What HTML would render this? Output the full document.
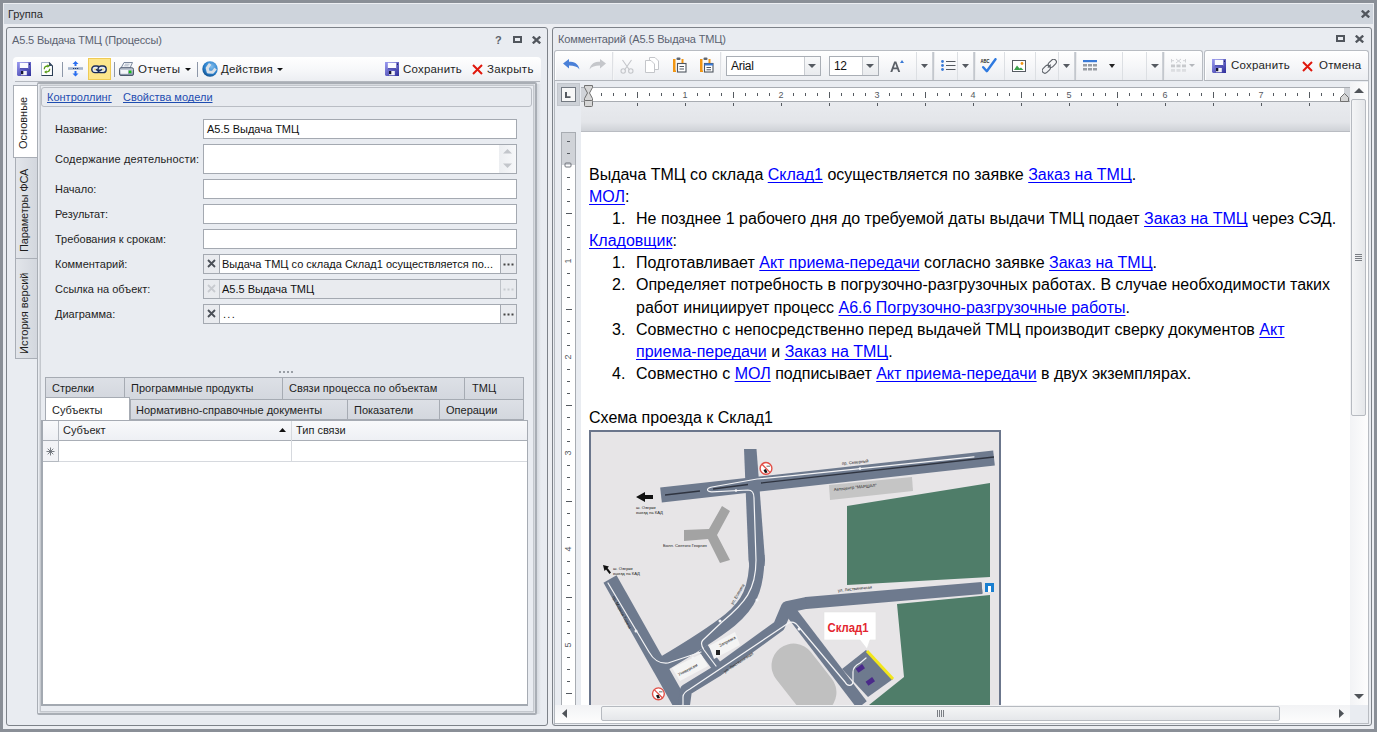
<!DOCTYPE html>
<html><head><meta charset="utf-8">
<style>
*{box-sizing:border-box}
html,body{margin:0;padding:0}
body{width:1377px;height:732px;overflow:hidden;position:relative;background:#8a8f97;font-family:"Liberation Sans",sans-serif;font-size:11px;color:#1e1e1e}
.a{position:absolute}
.t{position:absolute;white-space:nowrap;line-height:13px}
#frame{left:3px;top:3px;width:1371px;height:726px;background:#eceef2}
#gtitle{left:4px;top:4px;width:1369px;height:20px;background:#ced4dc}
.panel{border:1px solid #7d8289;border-radius:3px;background:#e9ecf1}
.lnk{color:#1f4db0;text-decoration:underline;text-decoration-skip-ink:none}
.inp{background:#fff;border:1px solid #a4a9b1}
.tb{background:linear-gradient(#ffffff,#eef0f3);border-radius:3px}
</style></head><body>
<div id="frame" class="a"></div>
<div id="gtitle" class="a"></div>
<div class="t" style="left:8px;top:8px;color:#2b2b2b">Группа</div>

<!-- LEFT PANEL -->
<div class="a panel" style="left:6px;top:27px;width:542px;height:699px"></div>
<div class="t" style="left:12px;top:34px;color:#5b6270;letter-spacing:-0.16px">А5.5 Выдача ТМЦ (Процессы)</div>


<!-- left title icons -->
<div class="t" style="left:495px;top:34px;font-weight:bold;color:#5d636b;font-size:11px">?</div>
<div class="a" style="left:513px;top:36px;width:9px;height:7px;border:2px solid #51565d"></div>
<svg class="a" style="left:532px;top:36px" width="9" height="8" viewBox="0 0 9 8"><path d="M0.8 0.6L8.2 7.4M8.2 0.6L0.8 7.4" stroke="#51565d" stroke-width="2.3"/></svg>

<!-- left toolbar -->
<div class="a" style="left:13px;top:57px;width:528px;height:24px;background:linear-gradient(#ffffff 0%,#f7f8fa 50%,#eceef2 100%);border-radius:4px 4px 0 0"></div>
<div class="a" style="left:15px;top:81px;width:525px;height:1px;background:#b3b7be"></div>


<!-- toolbar icons -->
<svg class="a" style="left:17px;top:62px" width="14" height="14" viewBox="0 0 14 14">
 <defs><linearGradient id="fl" x1="0" y1="0" x2="1" y2="1"><stop offset="0" stop-color="#9c9cf2"/><stop offset="1" stop-color="#2e2e9a"/></linearGradient></defs>
 <path d="M0 0H14V14H1L0 13Z" fill="url(#fl)"/>
 <rect x="2.8" y="0.8" width="8.4" height="6.2" fill="#fbfbff"/><rect x="2.8" y="6.2" width="8.4" height="1" fill="#2a2aa0"/><rect x="12" y="1.5" width="1" height="1.5" fill="#222266"/>
 <rect x="4" y="9" width="5.8" height="4.2" fill="#f2f2f8"/><rect x="4" y="9" width="2.3" height="3.2" fill="#151530"/>
</svg>
<svg class="a" style="left:41px;top:62px" width="12" height="14" viewBox="0 0 12 14">
 <path d="M0.5 0.5H8L11.5 4V13.5H0.5Z" fill="#fff"/>
 <path d="M0.5 13.5V0.5H8" fill="none" stroke="#a3b3ca" stroke-width="1"/>
 <path d="M8 0.5L11.5 4V13.5H0.5" fill="none" stroke="#2c3e55" stroke-width="1.1"/>
 <path d="M8 0.5V4H11.5Z" fill="#3a4d66"/>
 <path d="M3.3 7.2C3.3 5 4.6 4 7 4" fill="none" stroke="#5a9e1a" stroke-width="1.3"/>
 <path d="M6.5 2.3L8.9 4L6.5 5.7Z" fill="#5a9e1a"/>
 <path d="M8.7 6.8C8.7 9 7.4 10 5 10" fill="none" stroke="#5a9e1a" stroke-width="1.3"/>
 <path d="M5.5 8.3L3.1 10L5.5 11.7Z" fill="#5a9e1a"/>
</svg>
<div class="a" style="left:62px;top:62px;width:1px;height:15px;background:#8d97a8"></div>
<svg class="a" style="left:68px;top:61px" width="15" height="16" viewBox="0 0 15 16">
 <rect x="0" y="6.2" width="15" height="2.6" fill="#a5b5cc"/>
 <rect x="5" y="7" width="1.2" height="1" fill="#1d3570"/><rect x="7" y="7" width="1.2" height="1" fill="#1d3570"/><rect x="9" y="7" width="1.2" height="1" fill="#1d3570"/>
 <path d="M7.5 0L10.5 3H8.5V5H6.5V3H4.5Z" fill="#2a6ef0"/>
 <path d="M7.5 15.5L10.5 12.5H8.5V10H6.5V12.5H4.5Z" fill="#2a6ef0"/>
</svg>
<div class="a" style="left:88px;top:58px;width:23px;height:22px;background:#fde68c;border:1px solid #efcb55"></div>
<svg class="a" style="left:91px;top:65px" width="16" height="9" viewBox="0 0 16 9">
 <rect x="0.8" y="1" width="8.2" height="6.6" rx="3.2" fill="#e4ebf5" stroke="#1b2c58" stroke-width="1.4"/>
 <rect x="7" y="1" width="8.2" height="6.6" rx="3.2" fill="#e4ebf5" stroke="#1b2c58" stroke-width="1.4"/>
 <rect x="3" y="3.6" width="2" height="1.6" fill="#f3dc70"/><rect x="11" y="3.6" width="2" height="1.6" fill="#f3dc70"/>
 <path d="M5 4.3C7 5.8 9 5.8 11 4.3" fill="none" stroke="#1b2c58" stroke-width="1.6"/>
</svg>
<div class="a" style="left:114px;top:62px;width:1px;height:15px;background:#8d97a8"></div>
<svg class="a" style="left:119px;top:62px" width="15" height="14" viewBox="0 0 15 14">
 <defs><linearGradient id="pb" x1="0" y1="0" x2="0" y2="1"><stop offset="0" stop-color="#cfd6e0"/><stop offset="1" stop-color="#7f8ca0"/></linearGradient></defs>
 <path d="M5 0.5H13.5L11 6H2Z" fill="#f1f3f7" stroke="#6d7b92" stroke-width="0.9"/>
 <path d="M6 2.2H10.5M5.2 3.8H9.5" stroke="#9aa6b8" stroke-width="0.7"/>
 <path d="M0.5 7.5Q0.5 5.8 2 5.8H13Q14.5 5.8 14.5 7.5V12Q14.5 13.5 13 13.5H2Q0.5 13.5 0.5 12Z" fill="url(#pb)" stroke="#3f4c62" stroke-width="0.9"/>
 <rect x="1.5" y="8" width="7.5" height="3.8" fill="#f4f6fa"/>
 <rect x="9.8" y="8.6" width="2.6" height="2.6" fill="#12c012"/>
</svg>
<div class="t" style="left:138px;top:63px;font-size:11.5px;color:#1e1e1e;letter-spacing:0.45px">Отчеты</div>
<svg class="a" style="left:185px;top:68px" width="6" height="3" viewBox="0 0 6 3"><path d="M0 0H6L3 3Z" fill="#111"/></svg>
<div class="a" style="left:197px;top:62px;width:1px;height:15px;background:#8d97a8"></div>
<svg class="a" style="left:202px;top:61px" width="16" height="16" viewBox="0 0 16 16">
 <defs><radialGradient id="gl" cx="0.6" cy="0.35" r="0.7"><stop offset="0" stop-color="#7fbcec"/><stop offset="0.65" stop-color="#2a80cc"/><stop offset="1" stop-color="#0f4c88"/></radialGradient></defs>
 <circle cx="8" cy="8" r="7.7" fill="url(#gl)"/>
 <path d="M8.2 2.8L5.2 7.2L6.2 11L10.8 11.2L13.6 7.6" fill="none" stroke="#d9e0e8" stroke-width="3" stroke-linejoin="round"/>
</svg>
<div class="t" style="left:221px;top:63px;font-size:11.5px;color:#1e1e1e;letter-spacing:0.2px">Действия</div>
<svg class="a" style="left:277px;top:68px" width="6" height="3" viewBox="0 0 6 3"><path d="M0 0H6L3 3Z" fill="#111"/></svg>
<svg class="a" style="left:385px;top:62px" width="14" height="14" viewBox="0 0 14 14">
 <path d="M0 0H14V14H1L0 13Z" fill="url(#fl)"/>
 <rect x="2.8" y="0.8" width="8.4" height="6.2" fill="#fbfbff"/><rect x="2.8" y="6.2" width="8.4" height="1" fill="#2a2aa0"/><rect x="12" y="1.5" width="1" height="1.5" fill="#222266"/>
 <rect x="4" y="9" width="5.8" height="4.2" fill="#f2f2f8"/><rect x="4" y="9" width="2.3" height="3.2" fill="#151530"/>
</svg>
<div class="t" style="left:403px;top:63px;font-size:11.5px;color:#1e1e1e;letter-spacing:0.2px">Сохранить</div>
<svg class="a" style="left:472px;top:64px" width="11" height="11" viewBox="0 0 11 11"><path d="M1 1L10 10M10 1L1 10" stroke="#e0180c" stroke-width="2"/></svg>
<div class="t" style="left:487px;top:63px;font-size:11.5px;color:#1e1e1e;letter-spacing:0.35px">Закрыть</div>

<!-- vertical tabs -->
<div class="a" style="left:15px;top:157px;width:22px;height:102px;background:linear-gradient(90deg,#e2e5ea,#d3d7de);border:1px solid #a9aeb6;border-right:none"></div>
<div class="a" style="left:15px;top:258px;width:22px;height:101px;background:linear-gradient(90deg,#e2e5ea,#d3d7de);border:1px solid #a9aeb6;border-right:none"></div>
<div class="a" style="left:13px;top:85px;width:25px;height:73px;background:#fff;border:1px solid #a9aeb6;border-right:none"></div>
<div class="t" style="left:17px;top:149px;transform-origin:0 0;transform:rotate(-90deg);color:#1e1e1e">Основные</div>
<div class="t" style="left:18px;top:252px;transform-origin:0 0;transform:rotate(-90deg);color:#1e1e1e;letter-spacing:-0.15px">Параметры ФСА</div>
<div class="t" style="left:18px;top:354px;transform-origin:0 0;transform:rotate(-90deg);color:#1e1e1e">История версий</div>

<!-- content area -->
<div class="a" style="left:37px;top:82px;width:500px;height:633px;border:1px solid #a9aeb5;border-width:2px 2px 2px 1px;border-radius:2px"></div>
<div class="a" style="left:39px;top:84px;width:496px;height:629px;border:1px solid #d7dadf;border-radius:2px"></div>
<div class="a" style="left:40px;top:85px;width:494px;height:627px;border:1px solid #c4c8ce;"></div>

<div class="a" style="left:537px;top:84px;width:4px;height:630px;background:linear-gradient(90deg,#d5d9df,#e9ecf1)"></div>
<div class="a" style="left:41px;top:87px;width:491px;height:20px;border:1px solid #b9bdc4;border-radius:3px;background:#e8ebf0"></div>
<div class="t lnk" style="left:47px;top:91px">Контроллинг</div>
<div class="t lnk" style="left:123px;top:91px">Свойства модели</div>

<div class="t" style="left:55px;top:123px">Название:</div>
<div class="t" style="left:55px;top:153px;letter-spacing:0.15px">Содержание деятельности:</div>
<div class="t" style="left:55px;top:183px">Начало:</div>
<div class="t" style="left:55px;top:208px">Результат:</div>
<div class="t" style="left:55px;top:233px">Требования к срокам:</div>
<div class="t" style="left:55px;top:258px">Комментарий:</div>
<div class="t" style="left:55px;top:283px">Ссылка на объект:</div>
<div class="t" style="left:55px;top:308px">Диаграмма:</div>

<div class="a inp" style="left:203px;top:119px;width:314px;height:20px"></div>
<div class="t" style="left:207px;top:123px;color:#111">А5.5 Выдача ТМЦ</div>
<div class="a inp" style="left:203px;top:144px;width:314px;height:30px"></div>
<div class="a" style="left:499px;top:145px;width:17px;height:28px;background:linear-gradient(90deg,#eceef1,#f7f8fa)"></div>
<svg class="a" style="left:502px;top:148px" width="11" height="22" viewBox="0 0 11 22"><path d="M1 5.5L5.5 1L10 5.5Z" fill="#c3c6cb"/><path d="M1 15.5L5.5 20L10 15.5Z" fill="#c3c6cb"/></svg>
<div class="a inp" style="left:203px;top:179px;width:314px;height:20px"></div>
<div class="a inp" style="left:203px;top:204px;width:314px;height:20px"></div>
<div class="a inp" style="left:203px;top:229px;width:314px;height:20px"></div>

<div class="a inp" style="left:203px;top:254px;width:314px;height:20px"></div>
<div class="a" style="left:204px;top:255px;width:16px;height:18px;background:#e9ebef;border-right:1px solid #a4a9b1"></div>
<svg class="a" style="left:207px;top:259px" width="9" height="9" viewBox="0 0 9 9"><path d="M1 1L8 8M8 1L1 8" stroke="#4a4f57" stroke-width="1.8"/></svg>
<div class="t" style="left:222px;top:258px;color:#111">Выдача ТМЦ со склада Склад1 осуществляется по...</div>
<div class="a" style="left:500px;top:255px;width:16px;height:18px;background:#e9ebef;border-left:1px solid #a4a9b1"></div>
<svg class="a" style="left:503px;top:263px" width="11" height="3" viewBox="0 0 11 3"><rect x="0.5" y="0.5" width="2" height="2" fill="#444"/><rect x="4.5" y="0.5" width="2" height="2" fill="#444"/><rect x="8.5" y="0.5" width="2" height="2" fill="#444"/></svg>

<div class="a inp" style="left:203px;top:279px;width:314px;height:20px;background:#e9ebef"></div>
<div class="a" style="left:204px;top:280px;width:16px;height:18px;background:#e9ebef;border-right:1px solid #bfc3c9"></div>
<svg class="a" style="left:207px;top:284px" width="9" height="9" viewBox="0 0 9 9"><path d="M1 1L8 8M8 1L1 8" stroke="#c8cbd0" stroke-width="1.8"/></svg>
<div class="t" style="left:222px;top:283px;color:#111">А5.5 Выдача ТМЦ</div>
<div class="a" style="left:500px;top:280px;width:16px;height:18px;background:#e9ebef;border-left:1px solid #bfc3c9"></div>
<svg class="a" style="left:503px;top:288px" width="11" height="3" viewBox="0 0 11 3"><rect x="0.5" y="0.5" width="2" height="2" fill="#c8cbd0"/><rect x="4.5" y="0.5" width="2" height="2" fill="#c8cbd0"/><rect x="8.5" y="0.5" width="2" height="2" fill="#c8cbd0"/></svg>

<div class="a inp" style="left:203px;top:304px;width:314px;height:20px"></div>
<div class="a" style="left:204px;top:305px;width:16px;height:18px;background:#e9ebef;border-right:1px solid #a4a9b1"></div>
<svg class="a" style="left:207px;top:309px" width="9" height="9" viewBox="0 0 9 9"><path d="M1 1L8 8M8 1L1 8" stroke="#4a4f57" stroke-width="1.8"/></svg>
<div class="t" style="left:223px;top:308px;color:#111;letter-spacing:1.3px">...</div>
<div class="a" style="left:500px;top:305px;width:16px;height:18px;background:#e9ebef;border-left:1px solid #a4a9b1"></div>
<svg class="a" style="left:503px;top:313px" width="11" height="3" viewBox="0 0 11 3"><rect x="0.5" y="0.5" width="2" height="2" fill="#444"/><rect x="4.5" y="0.5" width="2" height="2" fill="#444"/><rect x="8.5" y="0.5" width="2" height="2" fill="#444"/></svg>

<!-- splitter dots -->
<svg class="a" style="left:279px;top:371px" width="14" height="2" viewBox="0 0 14 2"><rect x="0" y="0" width="2" height="2" fill="#9a9fa6"/><rect x="4" y="0" width="2" height="2" fill="#9a9fa6"/><rect x="8" y="0" width="2" height="2" fill="#9a9fa6"/><rect x="12" y="0" width="2" height="2" fill="#9a9fa6"/></svg>

<!-- bottom tabs -->
<div class="a" style="left:45px;top:377px;width:80px;height:23px;background:linear-gradient(#dde0e6,#d3d7de);border:1px solid #a6abb3"></div>
<div class="a" style="left:124px;top:377px;width:159px;height:23px;background:linear-gradient(#dde0e6,#d3d7de);border:1px solid #a6abb3"></div>
<div class="a" style="left:282px;top:377px;width:183px;height:23px;background:linear-gradient(#dde0e6,#d3d7de);border:1px solid #a6abb3"></div>
<div class="a" style="left:464px;top:377px;width:60px;height:23px;background:linear-gradient(#dde0e6,#d3d7de);border:1px solid #a6abb3"></div>
<div class="t" style="left:52px;top:382px">Стрелки</div>
<div class="t" style="left:131px;top:382px">Программные продукты</div>
<div class="t" style="left:289px;top:382px">Связи процесса по объектам</div>
<div class="t" style="left:472px;top:382px">ТМЦ</div>

<div class="a" style="left:130px;top:399px;width:218px;height:21px;background:linear-gradient(#dde0e6,#d3d7de);border:1px solid #a6abb3"></div>
<div class="a" style="left:347px;top:399px;width:93px;height:21px;background:linear-gradient(#dde0e6,#d3d7de);border:1px solid #a6abb3"></div>
<div class="a" style="left:439px;top:399px;width:85px;height:21px;background:linear-gradient(#dde0e6,#d3d7de);border:1px solid #a6abb3"></div>
<div class="t" style="left:136px;top:404px">Нормативно-справочные документы</div>
<div class="t" style="left:354px;top:404px">Показатели</div>
<div class="t" style="left:446px;top:404px">Операции</div>

<!-- grid -->
<div class="a" style="left:41px;top:420px;width:487px;height:286px;background:#fff;border:2px solid #a3a9b1;border-top:1px solid #a6abb3;border-right:1px solid #a6abb3"></div>
<div class="a" style="left:43px;top:421px;width:484px;height:20px;background:linear-gradient(#f8f9fb,#eef0f4);border-bottom:1px solid #a9aeb6"></div>
<div class="a" style="left:58px;top:421px;width:1px;height:41px;background:#b4b9c0"></div>
<div class="a" style="left:291px;top:421px;width:1px;height:41px;background:#d6d9de"></div>
<div class="a" style="left:43px;top:441px;width:15px;height:21px;background:#f2f3f6;border-bottom:1px solid #b4b9c0"></div>
<div class="a" style="left:59px;top:461px;width:468px;height:1px;background:#d6d9de"></div>
<div class="t" style="left:63px;top:424px">Субъект</div>
<svg class="a" style="left:279px;top:428px" width="7" height="4" viewBox="0 0 7 4"><path d="M0 4L3.5 0L7 4Z" fill="#111"/></svg>
<div class="t" style="left:296px;top:424px">Тип связи</div>
<svg class="a" style="left:46px;top:447px" width="9" height="9" viewBox="0 0 9 9"><path d="M4.5 0.5V8.5M0.5 4.5H8.5M1.7 1.7L7.3 7.3M7.3 1.7L1.7 7.3" stroke="#6a6f76" stroke-width="0.9"/></svg>

<!-- selected tab on top -->
<div class="a" style="left:45px;top:397px;width:85px;height:23px;background:#fff;border:1px solid #a6abb3;border-bottom:none"></div>
<div class="t" style="left:52px;top:404px">Субъекты</div>

<!-- RIGHT PANEL -->
<div class="a panel" style="left:552px;top:27px;width:820px;height:699px"></div>
<div class="t" style="left:558px;top:33px;color:#5b6270;letter-spacing:-0.14px">Комментарий (А5.5 Выдача ТМЦ)</div>
<!-- editor area -->
<div class="a" style="left:554px;top:60px;width:814px;height:665px;background:#e9ecf1;border-left:1px solid #b3b8be"></div>
<div class="a" style="left:557px;top:83px;width:23px;height:23px;background:#cdd1d7;border:1px solid #c2c6cc"></div>
<div class="a" style="left:561px;top:87px;width:15px;height:15px;background:#f7f7f7;border:1px solid #737981"></div>
<svg class="a" style="left:565px;top:92px" width="6" height="6" viewBox="0 0 6 6"><path d="M0 0H2V4.2H5.5V6H0Z" fill="#555a60"/></svg>
<div class="a" style="left:581px;top:101px;width:769px;height:30px;background:linear-gradient(#e9ebef 0%,#e3e5e9 70%,#cfd2d7 100%)"></div>
<div class="a" style="left:581px;top:87px;width:769px;height:15px;background:#fff;border-top:1px solid #a8acb2;border-bottom:1px solid #a8acb2"></div>
<div class="a" style="left:581px;top:88px;width:8px;height:13px;background:#d0d3d8"></div>
<div class="a" style="left:1344px;top:88px;width:6px;height:13px;background:#d0d3d8"></div>
<svg class="a" style="left:0;top:0" width="1377" height="732" viewBox="0 0 1377 732">
<rect x="601" y="93" width="1" height="3" fill="#555a60"/>
<rect x="613" y="93" width="1" height="3" fill="#555a60"/>
<rect x="625" y="93" width="1" height="3" fill="#555a60"/>
<rect x="637" y="92" width="1" height="6" fill="#555a60"/>
<rect x="649" y="93" width="1" height="3" fill="#555a60"/>
<rect x="661" y="93" width="1" height="3" fill="#555a60"/>
<rect x="673" y="93" width="1" height="3" fill="#555a60"/>
<text x="685" y="98" font-family="Liberation Sans" font-size="9" fill="#55595f" text-anchor="middle">1</text>
<rect x="697" y="93" width="1" height="3" fill="#555a60"/>
<rect x="709" y="93" width="1" height="3" fill="#555a60"/>
<rect x="721" y="93" width="1" height="3" fill="#555a60"/>
<rect x="733" y="92" width="1" height="6" fill="#555a60"/>
<rect x="745" y="93" width="1" height="3" fill="#555a60"/>
<rect x="757" y="93" width="1" height="3" fill="#555a60"/>
<rect x="769" y="93" width="1" height="3" fill="#555a60"/>
<text x="781" y="98" font-family="Liberation Sans" font-size="9" fill="#55595f" text-anchor="middle">2</text>
<rect x="793" y="93" width="1" height="3" fill="#555a60"/>
<rect x="805" y="93" width="1" height="3" fill="#555a60"/>
<rect x="817" y="93" width="1" height="3" fill="#555a60"/>
<rect x="829" y="92" width="1" height="6" fill="#555a60"/>
<rect x="841" y="93" width="1" height="3" fill="#555a60"/>
<rect x="853" y="93" width="1" height="3" fill="#555a60"/>
<rect x="865" y="93" width="1" height="3" fill="#555a60"/>
<text x="877" y="98" font-family="Liberation Sans" font-size="9" fill="#55595f" text-anchor="middle">3</text>
<rect x="889" y="93" width="1" height="3" fill="#555a60"/>
<rect x="901" y="93" width="1" height="3" fill="#555a60"/>
<rect x="913" y="93" width="1" height="3" fill="#555a60"/>
<rect x="925" y="92" width="1" height="6" fill="#555a60"/>
<rect x="937" y="93" width="1" height="3" fill="#555a60"/>
<rect x="949" y="93" width="1" height="3" fill="#555a60"/>
<rect x="961" y="93" width="1" height="3" fill="#555a60"/>
<text x="973" y="98" font-family="Liberation Sans" font-size="9" fill="#55595f" text-anchor="middle">4</text>
<rect x="985" y="93" width="1" height="3" fill="#555a60"/>
<rect x="997" y="93" width="1" height="3" fill="#555a60"/>
<rect x="1009" y="93" width="1" height="3" fill="#555a60"/>
<rect x="1021" y="92" width="1" height="6" fill="#555a60"/>
<rect x="1033" y="93" width="1" height="3" fill="#555a60"/>
<rect x="1045" y="93" width="1" height="3" fill="#555a60"/>
<rect x="1057" y="93" width="1" height="3" fill="#555a60"/>
<text x="1069" y="98" font-family="Liberation Sans" font-size="9" fill="#55595f" text-anchor="middle">5</text>
<rect x="1081" y="93" width="1" height="3" fill="#555a60"/>
<rect x="1093" y="93" width="1" height="3" fill="#555a60"/>
<rect x="1105" y="93" width="1" height="3" fill="#555a60"/>
<rect x="1117" y="92" width="1" height="6" fill="#555a60"/>
<rect x="1129" y="93" width="1" height="3" fill="#555a60"/>
<rect x="1141" y="93" width="1" height="3" fill="#555a60"/>
<rect x="1153" y="93" width="1" height="3" fill="#555a60"/>
<text x="1165" y="98" font-family="Liberation Sans" font-size="9" fill="#55595f" text-anchor="middle">6</text>
<rect x="1177" y="93" width="1" height="3" fill="#555a60"/>
<rect x="1189" y="93" width="1" height="3" fill="#555a60"/>
<rect x="1201" y="93" width="1" height="3" fill="#555a60"/>
<rect x="1213" y="92" width="1" height="6" fill="#555a60"/>
<rect x="1225" y="93" width="1" height="3" fill="#555a60"/>
<rect x="1237" y="93" width="1" height="3" fill="#555a60"/>
<rect x="1249" y="93" width="1" height="3" fill="#555a60"/>
<text x="1261" y="98" font-family="Liberation Sans" font-size="9" fill="#55595f" text-anchor="middle">7</text>
<rect x="1273" y="93" width="1" height="3" fill="#555a60"/>
<rect x="1285" y="93" width="1" height="3" fill="#555a60"/>
<rect x="1297" y="93" width="1" height="3" fill="#555a60"/>
<rect x="1309" y="92" width="1" height="6" fill="#555a60"/>
<rect x="1321" y="93" width="1" height="3" fill="#555a60"/>
<rect x="1333" y="93" width="1" height="3" fill="#555a60"/>
<rect x="637" y="103" width="1" height="3" fill="#555a60"/>
<rect x="685" y="103" width="1" height="3" fill="#555a60"/>
<rect x="733" y="103" width="1" height="3" fill="#555a60"/>
<rect x="781" y="103" width="1" height="3" fill="#555a60"/>
<rect x="829" y="103" width="1" height="3" fill="#555a60"/>
<rect x="877" y="103" width="1" height="3" fill="#555a60"/>
<rect x="925" y="103" width="1" height="3" fill="#555a60"/>
<rect x="973" y="103" width="1" height="3" fill="#555a60"/>
<rect x="1021" y="103" width="1" height="3" fill="#555a60"/>
<rect x="1069" y="103" width="1" height="3" fill="#555a60"/>
<rect x="1117" y="103" width="1" height="3" fill="#555a60"/>
<rect x="1165" y="103" width="1" height="3" fill="#555a60"/>
<rect x="1213" y="103" width="1" height="3" fill="#555a60"/>
<rect x="1261" y="103" width="1" height="3" fill="#555a60"/>
<rect x="1309" y="103" width="1" height="3" fill="#555a60"/>
 <path d="M584.5 85.5H592.5V87.5L589.5 93L592.5 98.5V100.5H584.5V98.5L587.5 93L584.5 87.5Z" fill="#d6d6d6" stroke="#707070" stroke-width="1"/>
 <rect x="584.5" y="100.5" width="8" height="6" rx="1" fill="#d6d6d6" stroke="#707070" stroke-width="1"/>
 <path d="M1340.5 101.5V97.5L1344.5 93.5L1348.5 97.5V101.5Z" fill="#d6d6d6" stroke="#707070" stroke-width="1"/>
</svg>

<!-- page -->
<div class="a" style="left:581px;top:131px;width:769px;height:574px;background:#fff;border-top:1px solid #b9bcc2"></div>
<!-- vertical ruler -->
<div class="a" style="left:561px;top:132px;width:15px;height:573px;background:#fff;border:1px solid #a8acb2;border-bottom:none"></div>
<div class="a" style="left:562px;top:133px;width:13px;height:32px;background:#d0d3d8"></div>
<svg class="a" style="left:0;top:0" width="1377" height="732" viewBox="0 0 1377 732">
<rect x="567" y="141" width="3" height="1" fill="#555a60"/>
<rect x="567" y="153" width="3" height="1" fill="#555a60"/>
<rect x="565" y="163" width="6" height="4" rx="1" fill="none" stroke="#70757c" stroke-width="1"/>
<rect x="567" y="177" width="3" height="1" fill="#555a60"/>
<rect x="567" y="189" width="3" height="1" fill="#555a60"/>
<rect x="567" y="201" width="3" height="1" fill="#555a60"/>
<rect x="566" y="213" width="6" height="1" fill="#555a60"/>
<rect x="567" y="225" width="3" height="1" fill="#555a60"/>
<rect x="567" y="237" width="3" height="1" fill="#555a60"/>
<rect x="567" y="249" width="3" height="1" fill="#555a60"/>
<text x="0" y="0" transform="translate(571 261) rotate(-90)" font-family="Liberation Sans" font-size="9" fill="#55595f" text-anchor="middle">1</text>
<rect x="567" y="273" width="3" height="1" fill="#555a60"/>
<rect x="567" y="285" width="3" height="1" fill="#555a60"/>
<rect x="567" y="297" width="3" height="1" fill="#555a60"/>
<rect x="566" y="309" width="6" height="1" fill="#555a60"/>
<rect x="567" y="321" width="3" height="1" fill="#555a60"/>
<rect x="567" y="333" width="3" height="1" fill="#555a60"/>
<rect x="567" y="345" width="3" height="1" fill="#555a60"/>
<text x="0" y="0" transform="translate(571 357) rotate(-90)" font-family="Liberation Sans" font-size="9" fill="#55595f" text-anchor="middle">2</text>
<rect x="567" y="369" width="3" height="1" fill="#555a60"/>
<rect x="567" y="381" width="3" height="1" fill="#555a60"/>
<rect x="567" y="393" width="3" height="1" fill="#555a60"/>
<rect x="566" y="405" width="6" height="1" fill="#555a60"/>
<rect x="567" y="417" width="3" height="1" fill="#555a60"/>
<rect x="567" y="429" width="3" height="1" fill="#555a60"/>
<rect x="567" y="441" width="3" height="1" fill="#555a60"/>
<text x="0" y="0" transform="translate(571 453) rotate(-90)" font-family="Liberation Sans" font-size="9" fill="#55595f" text-anchor="middle">3</text>
<rect x="567" y="465" width="3" height="1" fill="#555a60"/>
<rect x="567" y="477" width="3" height="1" fill="#555a60"/>
<rect x="567" y="489" width="3" height="1" fill="#555a60"/>
<rect x="566" y="501" width="6" height="1" fill="#555a60"/>
<rect x="567" y="513" width="3" height="1" fill="#555a60"/>
<rect x="567" y="525" width="3" height="1" fill="#555a60"/>
<rect x="567" y="537" width="3" height="1" fill="#555a60"/>
<text x="0" y="0" transform="translate(571 549) rotate(-90)" font-family="Liberation Sans" font-size="9" fill="#55595f" text-anchor="middle">4</text>
<rect x="567" y="561" width="3" height="1" fill="#555a60"/>
<rect x="567" y="573" width="3" height="1" fill="#555a60"/>
<rect x="567" y="585" width="3" height="1" fill="#555a60"/>
<rect x="566" y="597" width="6" height="1" fill="#555a60"/>
<rect x="567" y="609" width="3" height="1" fill="#555a60"/>
<rect x="567" y="621" width="3" height="1" fill="#555a60"/>
<rect x="567" y="633" width="3" height="1" fill="#555a60"/>
<text x="0" y="0" transform="translate(571 645) rotate(-90)" font-family="Liberation Sans" font-size="9" fill="#55595f" text-anchor="middle">5</text>
<rect x="567" y="657" width="3" height="1" fill="#555a60"/>
<rect x="567" y="669" width="3" height="1" fill="#555a60"/>
<rect x="567" y="681" width="3" height="1" fill="#555a60"/>
<rect x="566" y="693" width="6" height="1" fill="#555a60"/>
</svg>


<!-- document text -->
<style>
.doc{position:absolute;left:589px;top:164px;font-family:"Liberation Sans",sans-serif;font-size:16px;line-height:22.1px;color:#000;white-space:nowrap}
.doc a{color:#0000ff;text-decoration:underline;text-decoration-skip-ink:none;text-underline-offset:2.2px}
.doc .li{padding-left:47px;position:relative}
.doc .li .n{position:absolute;left:23px}
</style>
<div class="doc">
<div>Выдача ТМЦ со склада <a>Склад1</a> осуществляется по заявке <a>Заказ на ТМЦ</a>.</div>
<div><a>МОЛ</a>:</div>
<div class="li"><span class="n">1.</span>Не позднее 1 рабочего дня до требуемой даты выдачи ТМЦ подает <a>Заказ на ТМЦ</a> через СЭД.</div>
<div><a>Кладовщик</a>:</div>
<div class="li"><span class="n">1.</span>Подготавливает <a>Акт приема-передачи</a> согласно заявке <a>Заказ на ТМЦ</a>.</div>
<div class="li"><span class="n">2.</span>Определяет потребность в погрузочно-разгрузочных работах. В случае необходимости таких<br>работ инициирует процесс <a>А6.6 Погрузочно-разгрузочные работы</a>.</div>
<div class="li"><span class="n">3.</span>Совместно с непосредственно перед выдачей ТМЦ производит сверку документов <a>Акт<br>приема-передачи</a> и <a>Заказ на ТМЦ</a>.</div>
<div class="li"><span class="n">4.</span>Совместно с <a>МОЛ</a> подписывает <a>Акт приема-передачи</a> в двух экземплярах.</div>
<div>&nbsp;</div>
<div>Схема проезда к Склад1</div>
</div>

<!-- map -->
<svg class="a" style="left:589px;top:430px" width="412" height="275" viewBox="589 430 412 275">
 <rect x="589" y="430" width="412" height="300" fill="#e7e5e7"/>
 <!-- green blocks -->
 <path d="M847 506L990 483V577L847 585Z" fill="#4f7d69"/>
 <path d="M897 604L990 595V705H869L904 677Z" fill="#4f7d69"/>
 <!-- gray building shapes -->
 <path d="M829 485L912 477L913 491L830 500Z" fill="#c5c5c5"/>
 <path d="M722 506L730 511L717 535L730 560L720 563L708 539L684 541L684 530L709 529Z" fill="#a3a3a3"/>
 <rect x="765" y="657" width="78" height="44" rx="22" transform="rotate(52 804 679)" fill="#c0c0c0"/>
 <path d="M744 449H756.5L765 560L764.5 566H749.5L748.5 560Z" fill="#6e7a8e"/>
 <g fill="none" stroke="#6e7a8e" stroke-linejoin="round">
  <path d="M661 495L994 458" stroke-width="15"/>
  <path d="M757 555C757 590 748 605 730 620C715 632 695 645 663 664" stroke-width="15"/>
  <path d="M610 579L681 705" stroke-width="15"/>
  <path d="M703 648L718 668" stroke-width="11"/>
  <path d="M684 705L686 690L717 671L779 626L787 607L806 603L982 588" stroke-width="12"/>
  <path d="M806 603L982 588" stroke-width="10"/>
  <path d="M791 612L862 705" stroke-width="12"/>
 </g>
 <!-- label rects -->
 <path d="M672 668L701 654L708 666L680 681Z" fill="#f4f4f4"/>
 <path d="M709 646L735 632L740 645L714 659Z" fill="#f4f4f4"/>
 <!-- warehouse lot -->
 <path d="M842 669L866 650L893 679L868 697Z" fill="#6e7a8e"/>
 <path d="M867 651L893 679" stroke="#f2e61a" stroke-width="3"/>
 <rect x="856" y="666" width="8" height="5" transform="rotate(-35 860 668)" fill="#4a2a8a"/>
 <rect x="866" y="679" width="8" height="5" transform="rotate(-35 870 681)" fill="#4a2a8a"/>
 <!-- dark median -->
 <path d="M665 495L700 491M713 489L748 484.5M761 483L994 457" stroke="#2f3440" stroke-width="1.3"/>
 <!-- white route -->
 <g fill="none" stroke="#f4f4f6" stroke-width="1.2" stroke-linejoin="round" stroke-linecap="round">
  <path d="M974 456.8L790 475.9L757 479L712 487C706 488 706 492 712 491.8L748 490C752 490 754 493 754 498L756 560C756 590 745 603 722 622L703 640C700 643 702 647 704 650L716 666"/>
  <path d="M608 583L649 652C653 659 658 664 668 663L701 652"/>
  <path d="M683 705L683 697C683 693 686 691 690 689L787 624C791 621 795 622 798 626L845 682C847 686 852 687 853 682L853 672C853 668 856 665 860 663L866 658"/>
 </g>
 <g fill="#f4f4f6">
  <circle cx="757" cy="600" r="1.5"/><circle cx="720" cy="621" r="1.5"/><circle cx="693" cy="658" r="1.5"/><circle cx="636" cy="631" r="1.5"/><circle cx="799" cy="629" r="1.5"/><circle cx="736" cy="490.5" r="1.3"/><circle cx="860" cy="468.6" r="1.3"/>
 </g>
 <!-- signs -->
 <circle cx="766" cy="468.4" r="5.9" fill="#fff" stroke="#e25048" stroke-width="1.4"/>
 <path d="M766.5 465.5L770 465.5L770 467L766.5 467Z" fill="#999"/><path d="M763.5 470L766 469L767.5 472.5L765 473Z" fill="#111"/>
 <path d="M762 464.2L770.2 472.6" stroke="#e25048" stroke-width="1.3"/>
 <circle cx="658.4" cy="693.8" r="5.9" fill="#fff" stroke="#e25048" stroke-width="1.4"/>
 <path d="M659 691L662.5 691L662.5 692.5L659 692.5Z" fill="#999"/><path d="M656 695.5L658.5 694.5L660 698L657.5 698.5Z" fill="#111"/>
 <path d="M654.2 689.6L662.6 698" stroke="#e25048" stroke-width="1.3"/>
 <rect x="985" y="583" width="9" height="9" fill="#1a7fd0"/><rect x="988" y="586" width="3" height="6" fill="#fff"/>
 <path d="M636 497L645 492V495H653V499H645V502Z" fill="#111"/>
 <path d="M603 565L609 566.5L607.5 568L611 572.5L609.5 574L606 569.5L604.5 571Z" fill="#111"/>
 <rect x="716" y="650" width="4" height="5" fill="#222"/>
 <!-- tiny labels -->
 <g font-family="Liberation Sans" font-size="4.2" fill="#222">
  <text x="636" y="509">ш. Озерки</text><text x="636" y="514">выезд на КАД</text>
  <text x="663" y="547">Болн. Святого Георгия</text>
  <text x="613" y="570">ш. Озерки</text><text x="613" y="575">выезд на КАД</text>
  <text x="834" y="491" transform="rotate(-6 834 491)">Автоцентр "МАРШАЛ"</text>
  <text x="842" y="465" transform="rotate(-6 842 465)">пр. Северный</text>
  <text x="838" y="592" transform="rotate(-6 838 592)">ул. Листвиничная</text>
  <text x="725" y="673" transform="rotate(-33 725 673)">ул. Листвиничная</text>
  <text x="612" y="597" transform="rotate(62 612 597)">пр. Мориса Тореза</text>
  <text x="733" y="605" transform="rotate(-60 733 605)">ул. Есенина</text>
  <text x="679" y="676" transform="rotate(-28 679 676)">Универсам</text>
  <text x="720" y="647" transform="rotate(-28 720 647)">Заправка</text>
 </g>
 <!-- Sklad label -->
 <path d="M824 612H876V640H870L867 649L860 640H824Z" fill="#fff" stroke="#e3e3e3" stroke-width="0.6"/>
 <text x="827.5" y="632" font-family="Liberation Sans" font-weight="bold" font-size="12.5" fill="#e3262f" textLength="41" lengthAdjust="spacingAndGlyphs">Склад1</text>
 <!-- border -->
 <rect x="590" y="431" width="410" height="300" fill="none" stroke="#6b768c" stroke-width="2"/>
</svg>
<!-- vertical scrollbar -->
<div class="a" style="left:1350px;top:82px;width:18px;height:623px;background:linear-gradient(90deg,#f2f3f5,#fdfdfd)"></div>
<svg class="a" style="left:1354px;top:88px" width="10" height="5" viewBox="0 0 10 5"><path d="M0 5L5 0L10 5Z" fill="#505459"/></svg>
<div class="a" style="left:1351px;top:99px;width:15px;height:317px;background:linear-gradient(90deg,#f4f5f6,#e5e7ea);border:1px solid #b6bac0;border-radius:2px"></div>
<svg class="a" style="left:1355px;top:254px" width="7" height="7" viewBox="0 0 7 7"><rect x="0" y="0" width="7" height="1" fill="#7a7e84"/><rect x="0" y="2" width="7" height="1" fill="#7a7e84"/><rect x="0" y="4" width="7" height="1" fill="#7a7e84"/><rect x="0" y="6" width="7" height="1" fill="#7a7e84"/></svg>
<svg class="a" style="left:1354px;top:694px" width="10" height="5" viewBox="0 0 10 5"><path d="M0 0L5 5L10 0Z" fill="#505459"/></svg>
<!-- horizontal scrollbar -->
<div class="a" style="left:555px;top:705px;width:795px;height:18px;background:linear-gradient(#f2f3f5,#fdfdfd)"></div>
<div class="a" style="left:1350px;top:705px;width:18px;height:18px;background:#e9ecf1"></div>
<svg class="a" style="left:562px;top:709px" width="5" height="9" viewBox="0 0 5 9"><path d="M5 0L0 4.5L5 9Z" fill="#505459"/></svg>
<svg class="a" style="left:1339px;top:709px" width="5" height="9" viewBox="0 0 5 9"><path d="M0 0L5 4.5L0 9Z" fill="#505459"/></svg>
<div class="a" style="left:601px;top:706px;width:679px;height:15px;background:linear-gradient(#f4f5f6,#e5e7ea);border:1px solid #b6bac0;border-radius:2px"></div>
<svg class="a" style="left:937px;top:710px" width="7" height="7" viewBox="0 0 7 7"><rect x="0" y="0" width="1" height="7" fill="#7a7e84"/><rect x="2" y="0" width="1" height="7" fill="#7a7e84"/><rect x="4" y="0" width="1" height="7" fill="#7a7e84"/><rect x="6" y="0" width="1" height="7" fill="#7a7e84"/></svg>
<div class="a" style="left:555px;top:723px;width:813px;height:1px;background:#b8bcc2"></div>
<div class="a" style="left:1368px;top:81px;width:1px;height:643px;background:#b8bcc2"></div>



<svg class="a" style="left:1336px;top:35px" width="9" height="7" viewBox="0 0 9 7"><rect x="1" y="1" width="7" height="5" fill="none" stroke="#51565d" stroke-width="2"/></svg>
<svg class="a" style="left:1355px;top:35px" width="9" height="8" viewBox="0 0 9 8"><path d="M0.8 0.6L8.2 7.4M8.2 0.6L0.8 7.4" stroke="#51565d" stroke-width="2.3"/></svg>
<svg class="a" style="left:1361px;top:10px" width="9" height="8" viewBox="0 0 9 8"><path d="M0.8 0.6L8.2 7.4M8.2 0.6L0.8 7.4" stroke="#51565d" stroke-width="2.3"/></svg>

<!-- right toolbar -->
<div class="a" style="left:554px;top:50px;width:649px;height:31px;background:linear-gradient(#ffffff 0%,#f5f6f8 55%,#eceef2 100%);border:1px solid #b8bcc2;border-bottom:1px solid #b1b5bb;border-radius:3px 3px 0 0;box-shadow:inset 1px 1px 0 #fff"></div>
<div class="a" style="left:1204px;top:50px;width:165px;height:31px;background:linear-gradient(#ffffff 0%,#f5f6f8 55%,#eceef2 100%);border:1px solid #b8bcc2;border-bottom:1px solid #b1b5bb;border-radius:3px 3px 0 0;box-shadow:inset 1px 1px 0 #fff"></div>

<!-- separators -->
<div class="a" style="left:612px;top:52px;width:2px;height:28px;background:linear-gradient(90deg,#d3d6db,#fff)"></div>
<div class="a" style="left:720px;top:52px;width:2px;height:28px;background:linear-gradient(90deg,#d3d6db,#fff)"></div>
<div class="a" style="left:916px;top:52px;width:1px;height:28px;background:#dcdfe3"></div>
<div class="a" style="left:932px;top:52px;width:3px;height:28px;background:linear-gradient(90deg,#d3d6db,#c3c7cd,#fff)"></div>
<div class="a" style="left:957px;top:52px;width:1px;height:28px;background:#dcdfe3"></div>
<div class="a" style="left:973px;top:52px;width:3px;height:28px;background:linear-gradient(90deg,#d3d6db,#c3c7cd,#fff)"></div>
<div class="a" style="left:1004px;top:52px;width:1px;height:28px;background:#dcdfe3"></div>
<div class="a" style="left:1035px;top:52px;width:1px;height:28px;background:#dcdfe3"></div>
<div class="a" style="left:1058px;top:52px;width:1px;height:28px;background:#dcdfe3"></div>
<div class="a" style="left:1074px;top:52px;width:3px;height:28px;background:linear-gradient(90deg,#d3d6db,#c3c7cd,#fff)"></div>
<div class="a" style="left:1122px;top:52px;width:1px;height:28px;background:#dcdfe3"></div>
<div class="a" style="left:1146px;top:52px;width:1px;height:28px;background:#dcdfe3"></div>
<div class="a" style="left:1162px;top:52px;width:3px;height:28px;background:linear-gradient(90deg,#d3d6db,#c3c7cd,#fff)"></div>

<!-- undo/redo -->
<svg class="a" style="left:563px;top:59px" width="17" height="11" viewBox="0 0 17 11"><path d="M0 4.5L6 0V2.8C11 2.8 15.5 4.5 16.5 10.5C14.5 7.5 11 6.5 6 6.5V9.5Z" fill="#4a80d8"/></svg>
<svg class="a" style="left:589px;top:59px" width="17" height="11" viewBox="0 0 17 11"><path d="M17 4.5L11 0V2.8C6 2.8 1.5 4.5 0.5 10.5C2.5 7.5 6 6.5 11 6.5V9.5Z" fill="#c5c7cb"/></svg>
<!-- scissors -->
<svg class="a" style="left:620px;top:59px" width="14" height="15" viewBox="0 0 14 15"><path d="M2.5 1L9.5 11M11.5 1L4.5 11" stroke="#c4c6ca" stroke-width="1.1" fill="none"/><circle cx="3.2" cy="12" r="2.2" fill="none" stroke="#c4c6ca" stroke-width="1.1"/><circle cx="10.8" cy="12" r="2.2" fill="none" stroke="#c4c6ca" stroke-width="1.1"/></svg>
<!-- copy -->
<svg class="a" style="left:645px;top:57px" width="14" height="16" viewBox="0 0 14 16"><path d="M4.5 0.5H10L13.5 4V12.5H4.5Z" fill="#fff" stroke="#c4c6ca"/><path d="M0.5 3.5H6L9.5 7V15.5H0.5Z" fill="#fff" stroke="#c4c6ca"/></svg>
<!-- paste -->
<svg class="a" style="left:672px;top:57px" width="15" height="16" viewBox="0 0 15 16"><path d="M1 2H3.5V14H1Z" fill="#f29612"/><rect x="1" y="13.5" width="3" height="1.5" fill="#f29612"/><path d="M9.5 2H11.5V6H9.5Z" fill="#f29612"/><rect x="4.5" y="0.5" width="4" height="2.5" rx="1" fill="#5f6670"/><rect x="5.5" y="6.5" width="8.5" height="8.5" fill="#fff" stroke="#4f5660" stroke-width="1.1"/><rect x="7.5" y="9" width="4.5" height="1" fill="#4f5660"/><rect x="7.5" y="11.5" width="4.5" height="1" fill="#4f5660"/></svg>
<svg class="a" style="left:699px;top:57px" width="15" height="16" viewBox="0 0 15 16"><path d="M1 2H3.5V14H1Z" fill="#f29612"/><rect x="1" y="13.5" width="3" height="1.5" fill="#f29612"/><path d="M9.5 2H11.5V6H9.5Z" fill="#f29612"/><rect x="4.5" y="0.5" width="4" height="2.5" rx="1" fill="#5f6670"/><rect x="5.5" y="6.5" width="8.5" height="8.5" fill="#fff" stroke="#4f5660" stroke-width="1.1"/><rect x="5.5" y="6.5" width="8.5" height="2" fill="#3a7ad6"/><rect x="7.5" y="10" width="4.5" height="1" fill="#4f5660"/><rect x="7.5" y="12.3" width="4.5" height="1" fill="#4f5660"/></svg>

<!-- font combo -->
<div class="a" style="left:726px;top:56px;width:95px;height:20px;background:#fff;border:1px solid #a9aeb5"></div>
<div class="a" style="left:804px;top:57px;width:16px;height:18px;background:linear-gradient(#f8f9fa,#e9ebee);border-left:1px solid #c9ccd1"></div>
<svg class="a" style="left:808px;top:64px" width="8" height="4" viewBox="0 0 8 4"><path d="M0 0H8L4 4Z" fill="#555a61"/></svg>
<div class="t" style="left:731px;top:60px;color:#111;font-size:12px;letter-spacing:-0.3px">Arial</div>
<div class="a" style="left:829px;top:56px;width:50px;height:20px;background:#fff;border:1px solid #a9aeb5"></div>
<div class="a" style="left:862px;top:57px;width:16px;height:18px;background:linear-gradient(#f8f9fa,#e9ebee);border-left:1px solid #c9ccd1"></div>
<svg class="a" style="left:866px;top:64px" width="8" height="4" viewBox="0 0 8 4"><path d="M0 0H8L4 4Z" fill="#555a61"/></svg>
<div class="t" style="left:834px;top:60px;color:#111;font-size:12px;letter-spacing:-0.3px">12</div>

<!-- A grow -->
<svg class="a" style="left:890px;top:61px" width="11" height="11" viewBox="0 0 11 11"><path d="M0.3 11L4.2 0.5H6.3L10.2 11H8.2L7.2 8.2H3.3L2.3 11ZM3.9 6.5H6.6L5.25 2.6Z" fill="#5b6067"/></svg>
<svg class="a" style="left:900px;top:60px" width="4" height="3" viewBox="0 0 4 3"><path d="M0 3L2 0L4 3Z" fill="#3a7ad6"/></svg>
<svg class="a" style="left:921px;top:64px" width="7" height="4" viewBox="0 0 7 4"><path d="M0 0H7L3.5 4Z" fill="#555a61"/></svg>
<!-- bullets -->
<svg class="a" style="left:941px;top:60px" width="15" height="11" viewBox="0 0 15 11"><circle cx="1.5" cy="1.5" r="1.4" fill="#3a7ad6"/><circle cx="1.5" cy="5.5" r="1.4" fill="#3a7ad6"/><circle cx="1.5" cy="9.5" r="1.4" fill="#3a7ad6"/><rect x="5" y="1" width="9.5" height="1" fill="#555a61"/><rect x="5" y="5" width="9.5" height="1" fill="#555a61"/><rect x="5" y="9" width="9.5" height="1" fill="#555a61"/></svg>
<svg class="a" style="left:962px;top:64px" width="7" height="4" viewBox="0 0 7 4"><path d="M0 0H7L3.5 4Z" fill="#555a61"/></svg>
<!-- spell -->
<svg class="a" style="left:980px;top:58px" width="17" height="15" viewBox="0 0 17 15"><text x="0.5" y="5.2" font-family="Liberation Sans" font-size="5" font-weight="bold" fill="#222" textLength="9" lengthAdjust="spacingAndGlyphs">ABC</text><path d="M3.2 9.2L6.8 13.2L15.5 1.2" stroke="#2f7ae0" stroke-width="2.4" fill="none" stroke-linecap="round" stroke-linejoin="round"/></svg>
<!-- image -->
<svg class="a" style="left:1012px;top:60px" width="14" height="12" viewBox="0 0 14 12"><rect x="0.5" y="0.5" width="13" height="11" fill="#fff" stroke="#555a61"/><path d="M2 10L5 5.5L7.5 8.5L9 7.5L11.5 10Z" fill="#3aa04a"/><circle cx="10" cy="3.5" r="1.4" fill="#f29612"/></svg>
<!-- link -->
<svg class="a" style="left:1042px;top:59px" width="15" height="15" viewBox="0 0 15 15">
 <rect x="7.6" y="-0.3" width="5.4" height="9.2" rx="2.7" transform="rotate(45 10.3 4.3)" fill="none" stroke="#5d6269" stroke-width="1.1"/>
 <rect x="1.6" y="5.6" width="5.4" height="9.2" rx="2.7" transform="rotate(45 4.3 10.2)" fill="none" stroke="#5d6269" stroke-width="1.1"/>
 <path d="M5.8 8.7L8.8 5.7" stroke="#5d6269" stroke-width="1.1"/>
</svg>
<svg class="a" style="left:1063px;top:64px" width="7" height="4" viewBox="0 0 7 4"><path d="M0 0H7L3.5 4Z" fill="#555a61"/></svg>
<!-- table -->
<svg class="a" style="left:1083px;top:60px" width="14" height="11" viewBox="0 0 14 11"><rect x="0" y="0" width="14" height="2.2" fill="#3a7ad6"/><rect x="0" y="4" width="4" height="2.5" fill="#999da3"/><rect x="5" y="4" width="4" height="2.5" fill="#999da3"/><rect x="10" y="4" width="4" height="2.5" fill="#999da3"/><rect x="0" y="8" width="4" height="2.5" fill="#999da3"/><rect x="5" y="8" width="4" height="2.5" fill="#999da3"/><rect x="10" y="8" width="4" height="2.5" fill="#999da3"/></svg>
<svg class="a" style="left:1109px;top:64px" width="6" height="4" viewBox="0 0 6 4"><path d="M0 0H6L3 4Z" fill="#222"/></svg>
<svg class="a" style="left:1151px;top:64px" width="8" height="4" viewBox="0 0 8 4"><path d="M0 0H8L4 4Z" fill="#555a61"/></svg>
<!-- merge disabled -->
<svg class="a" style="left:1171px;top:58px" width="15" height="15" viewBox="0 0 15 15"><path d="M0.5 1V4.5M14.5 1V4.5M0.5 2.7H3M12 2.7H14.5M5 1L10 5M10 1L5 5" stroke="#d0d2d6" stroke-width="1"/><rect x="0" y="6.5" width="4" height="2.8" fill="#c8cacd"/><rect x="5.5" y="6.5" width="4" height="2.8" fill="#c8cacd"/><rect x="11" y="6.5" width="4" height="2.8" fill="#c8cacd"/><rect x="0" y="11" width="4" height="2.8" fill="#dcdee1"/><rect x="5.5" y="11" width="4" height="2.8" fill="#dcdee1"/><rect x="11" y="11" width="4" height="2.8" fill="#dcdee1"/></svg>
<svg class="a" style="left:1189px;top:64px" width="6" height="3" viewBox="0 0 6 3"><path d="M0 0H6L3 3Z" fill="#b4b7bc"/></svg>

<svg class="a" style="left:1212px;top:59px" width="14" height="14" viewBox="0 0 14 14">
 <path d="M0 0H14V14H1L0 13Z" fill="url(#fl)"/>
 <rect x="2.8" y="0.8" width="8.4" height="6.2" fill="#fbfbff"/><rect x="2.8" y="6.2" width="8.4" height="1" fill="#2a2aa0"/><rect x="12" y="1.5" width="1" height="1.5" fill="#222266"/>
 <rect x="4" y="9" width="5.8" height="4.2" fill="#f2f2f8"/><rect x="4" y="9" width="2.3" height="3.2" fill="#151530"/>
</svg>
<div class="t" style="left:1231px;top:59px;font-size:11.5px;color:#1e1e1e;letter-spacing:0.2px">Сохранить</div>
<svg class="a" style="left:1302px;top:61px" width="11" height="11" viewBox="0 0 11 11"><path d="M1 1L10 10M10 1L1 10" stroke="#e0180c" stroke-width="2"/></svg>
<div class="t" style="left:1319px;top:59px;font-size:11.5px;color:#1e1e1e;letter-spacing:0.2px">Отмена</div>

</body></html>
